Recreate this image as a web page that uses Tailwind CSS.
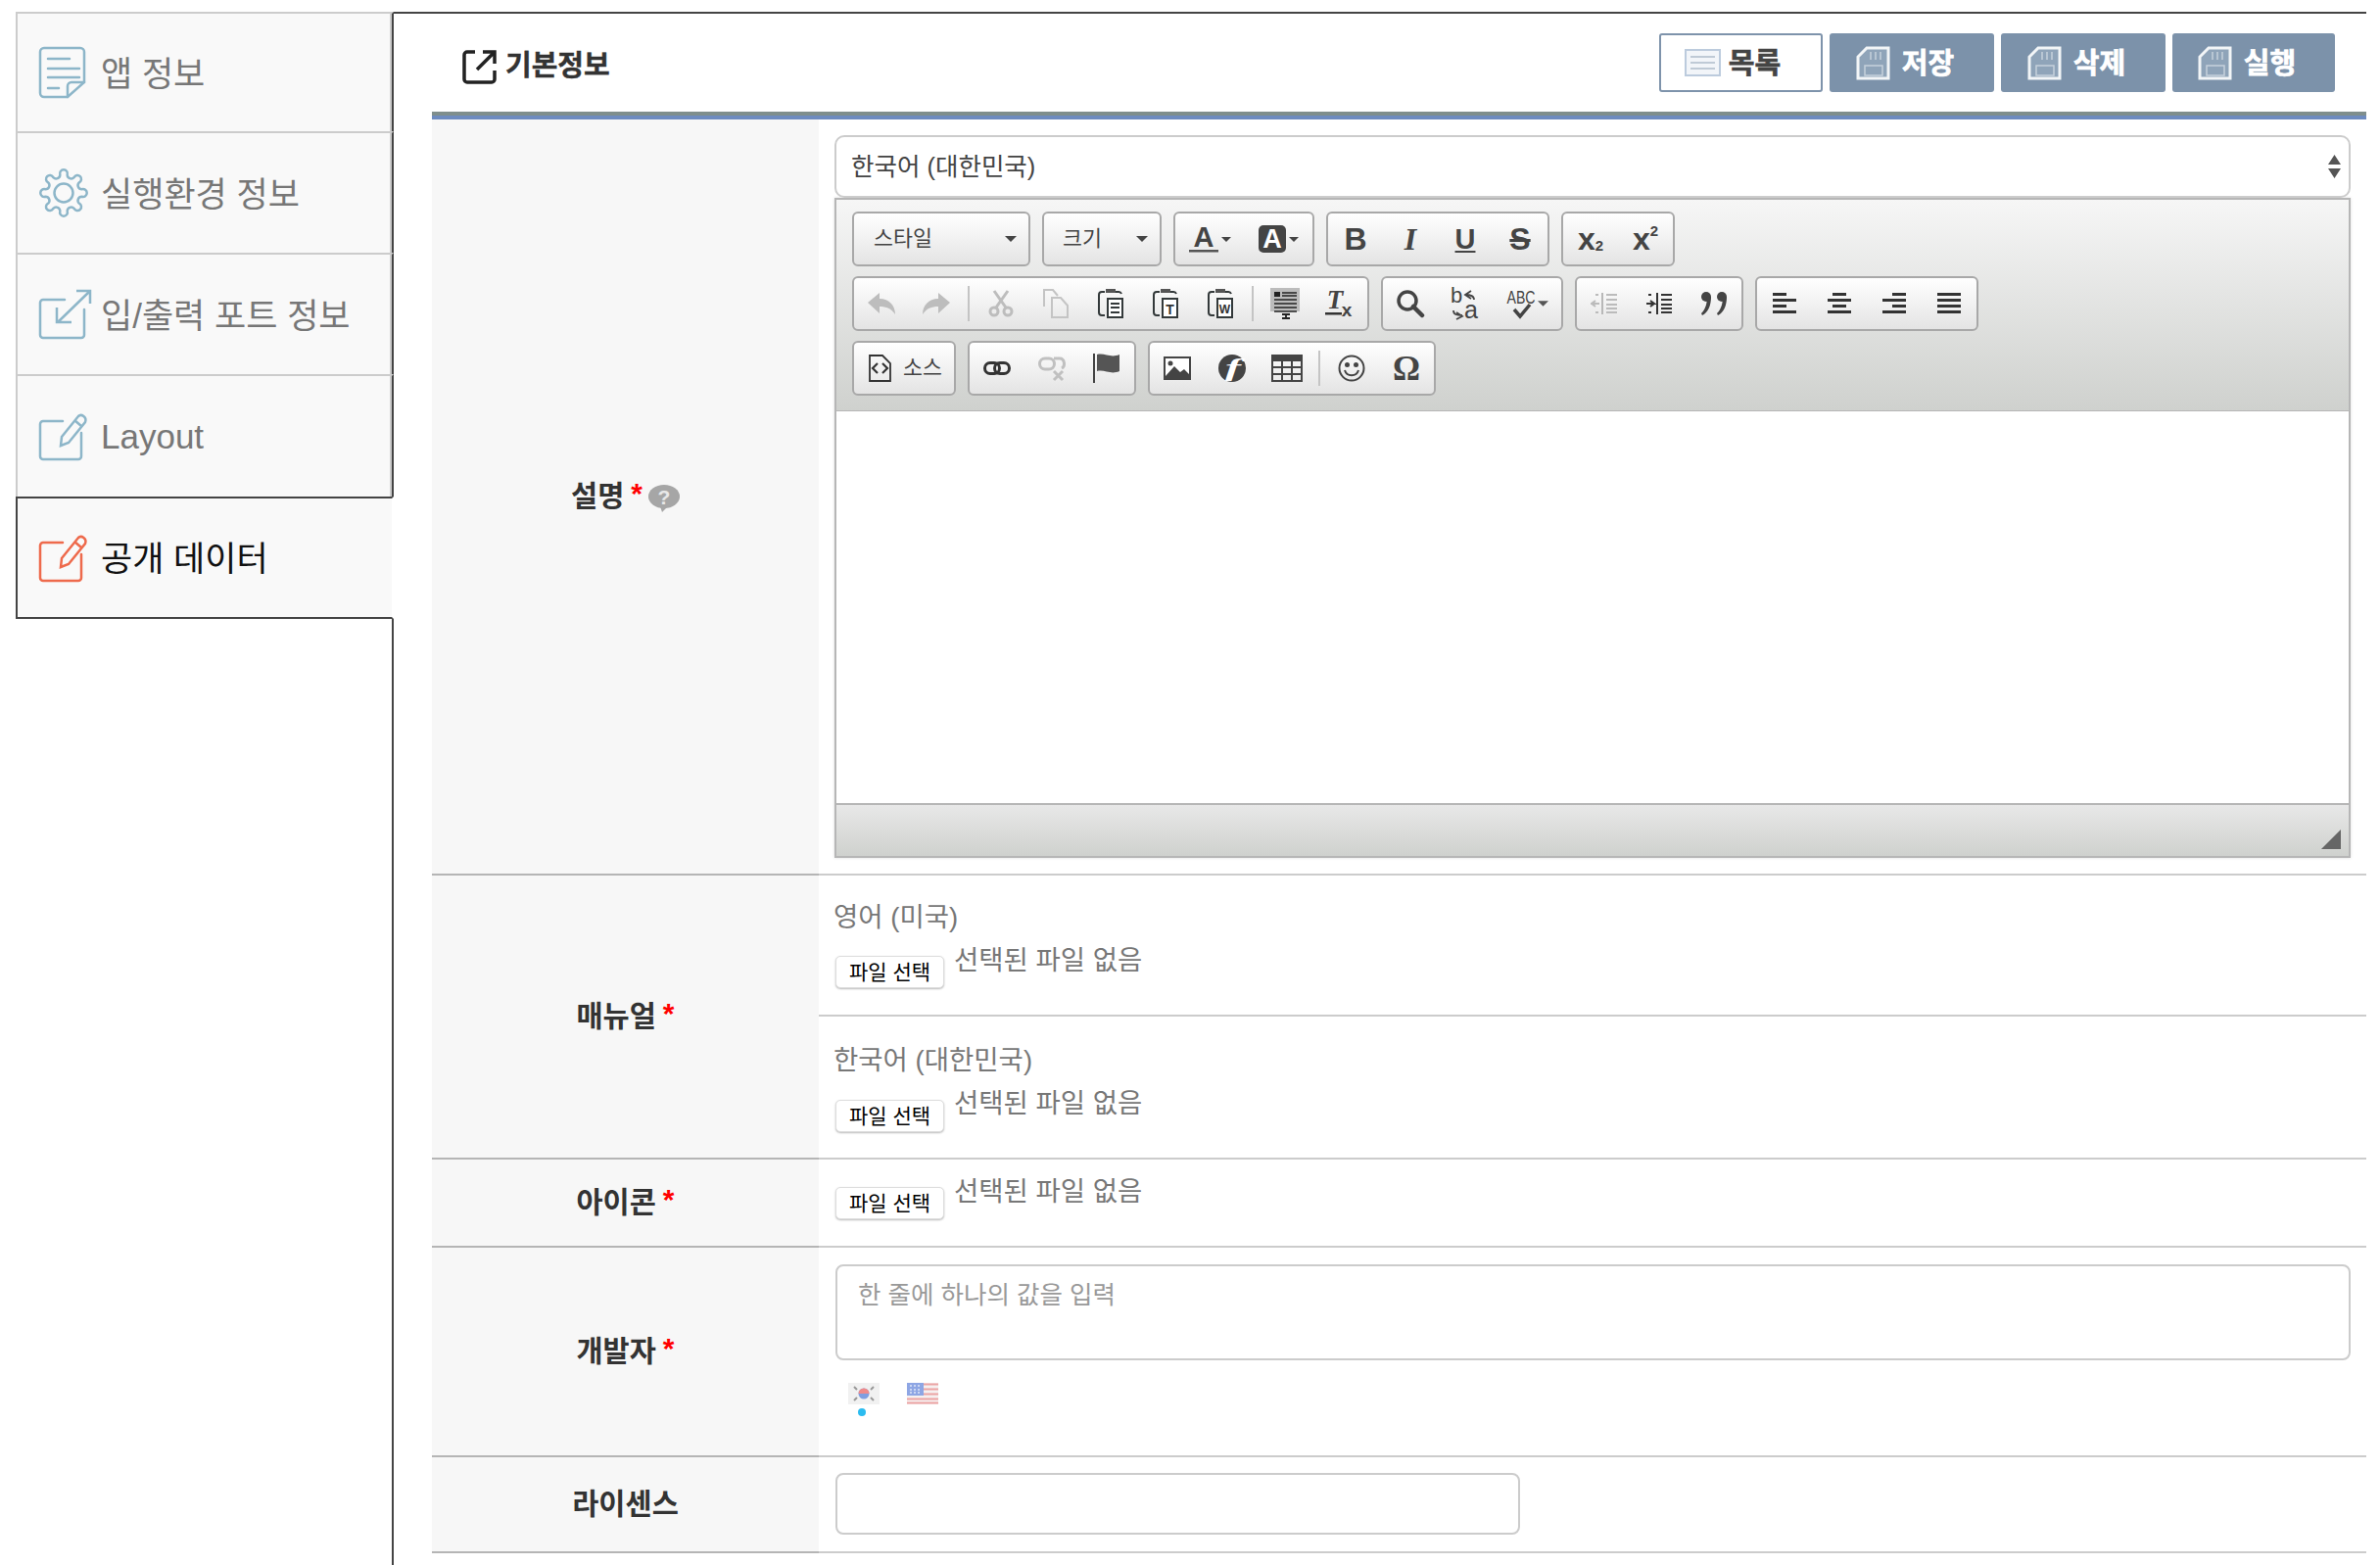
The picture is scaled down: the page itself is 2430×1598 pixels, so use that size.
<!DOCTYPE html>
<html lang="ko">
<head>
<meta charset="UTF-8" />
<title>공개 데이터</title>
<script src="https://cdn.jsdelivr.net/npm/@tailwindcss/browser@4"></script>
</head>
<body class="bg-white font-['Liberation_Sans','Noto_Sans_CJK_KR',sans-serif] text-[#444]">
<div class="flex h-[1598px] overflow-hidden pt-[12px] pl-[16px]">

  <!-- Side tabs -->
  <aside class="flex w-[386px] shrink-0 flex-col text-[35px] text-[#777]">
    <a class="flex h-[122px] shrink-0 items-center border-t-2 border-l-2 border-r-2 border-[#ccc] border-r-[#444] bg-[#f9f9f9] shadow-[inset_-2px_0_0_#ccc]">
      <span class="flex w-[85px] shrink-0 pl-[21px]">
        <svg width="49" height="54" viewBox="0 0 49 54" fill="none" stroke="#8db6c9" stroke-width="2.5"><path d="M30 52H6a4 4 0 0 1-4-4V6a4 4 0 0 1 4-4h37a4 4 0 0 1 4 4v31Z"/><path d="M30 52V41a4 4 0 0 1 4-4h13M10 13h22M10 23h32M10 32h32M10 43h11" stroke-linecap="round"/></svg>
      </span>
      <span class="pt-[4px]">앱 정보</span>
    </a>
    <a class="flex h-[124px] shrink-0 items-center border-t-2 border-l-2 border-r-2 border-[#ccc] border-r-[#444] bg-[#f9f9f9] shadow-[inset_-2px_0_0_#ccc]">
      <span class="flex w-[85px] shrink-0 pl-[21px]">
        <svg width="52" height="52" viewBox="0 0 52 52" fill="none" stroke="#8db6c9" stroke-width="2.5" stroke-linejoin="round"><circle cx="26" cy="26" r="9.500"/><path d="M44.600 22.300A3.900 3.900 0 1 1 44.600 29.700 4 4 0 0 0 41.800 36.600 3.900 3.900 0 1 1 36.600 41.800 4 4 0 0 0 29.700 44.600 3.900 3.900 0 1 1 22.300 44.600 4 4 0 0 0 15.400 41.800 3.900 3.900 0 1 1 10.200 36.600 4 4 0 0 0 7.400 29.700 3.900 3.900 0 1 1 7.400 22.300 4 4 0 0 0 10.200 15.400 3.900 3.900 0 1 1 15.400 10.200 4 4 0 0 0 22.300 7.400 3.900 3.900 0 1 1 29.700 7.400 4 4 0 0 0 36.600 10.200 3.900 3.900 0 1 1 41.800 15.400 4 4 0 0 0 44.600 22.300Z"/></svg>
      </span>
      <span class="pt-[4px]">실행환경 정보</span>
    </a>
    <a class="flex h-[124px] shrink-0 items-center border-t-2 border-l-2 border-r-2 border-[#ccc] border-r-[#444] bg-[#f9f9f9] shadow-[inset_-2px_0_0_#ccc]">
      <span class="flex w-[85px] shrink-0 pl-[21px]">
        <svg width="55" height="52" viewBox="0 0 55 52" fill="none" stroke="#8db6c9" stroke-width="2.5"><path d="M27 11H5a3 3 0 0 0-3 3v33a3 3 0 0 0 3 3h39a3 3 0 0 0 3-3V21" stroke-linecap="round"/><path d="M39 2h14v13M53 2 20 34M19 19v15h15"/></svg>
      </span>
      <span class="pt-[4px]">입/출력 포트 정보</span>
    </a>
    <a class="flex h-[125px] shrink-0 items-center border-t-2 border-l-2 border-r-2 border-[#ccc] border-r-[#444] bg-[#f9f9f9] shadow-[inset_-2px_0_0_#ccc]">
      <span class="flex w-[85px] shrink-0 pl-[21px]">
        <svg width="51" height="50" viewBox="0 0 51 50" fill="none" stroke="#8db6c9" stroke-width="2.5"><path d="M25 9H5a3 3 0 0 0-3 3v33a3 3 0 0 0 3 3h36a3 3 0 0 0 3-3V21" stroke-linecap="round"/><path d="M24 25 41 4c3-3 9 1 7 6L31 31l-8 3ZM37 8l7 6"/></svg>
      </span>
      <span class="pt-[1px]">Layout</span>
    </a>
    <a class="flex h-[125px] shrink-0 items-center border-y-2 border-l-2 border-r-2 border-[#444] border-r-white bg-[#f9f9f9] text-[#111]">
      <span class="flex w-[85px] shrink-0 pl-[21px]">
        <svg width="51" height="50" viewBox="0 0 51 50" fill="none" stroke="#ee6a4c" stroke-width="2.5"><path d="M25 9H5a3 3 0 0 0-3 3v33a3 3 0 0 0 3 3h36a3 3 0 0 0 3-3V21" stroke-linecap="round"/><path d="M24 25 41 4c3-3 9 1 7 6L31 31l-8 3ZM37 8l7 6"/></svg>
      </span>
      <span class="pt-[4px]">공개 데이터</span>
    </a>
    <div class="flex-1 border-r-2 border-[#444]"></div>
  </aside>

  <!-- Main panel -->
  <main class="mr-[14px] min-w-0 flex-1 self-start border-t-2 border-[#444] pl-[39px]">
    <header class="flex h-[100px] items-center justify-between pr-[32px] pl-[31px]">
      <h2 class="flex items-center gap-[9px] pt-[8px] text-[29px] font-bold text-[#333] [-webkit-text-stroke:0.4px_currentColor]">
        <svg width="35" height="36" viewBox="0 0 35 36" fill="none" stroke="#222" stroke-width="3.5"><path d="M13 3H5a3 3 0 0 0-3 3v25a3 3 0 0 0 3 3h25a3 3 0 0 0 3-3v-9"/><path d="M21 3h12v12M33 3 15 21"/></svg>
        기본정보
      </h2>
      <div class="flex gap-[7px] text-[29px] font-bold [-webkit-text-stroke:0.7px_currentColor]">
        <button class="flex h-[60px] w-[167px] items-center justify-center gap-[8px] rounded-[3px] border-2 border-[#7e93ab] bg-white pr-[17px] text-[#444]">
          <svg width="37" height="28" viewBox="0 0 37 28"><rect x="1" y="1" width="35" height="26" fill="#f2f5f9" stroke="#bccbdd" stroke-width="2"/><path d="M6 8h25M6 14h25M6 20h25" stroke="#bfcad6" stroke-width="2"/></svg>
          <span class="pt-[3px]">목록</span>
        </button>
        <button class="flex h-[60px] w-[168px] items-center justify-center gap-[12px] rounded-[3px] bg-[#7c92aa] pr-[14px] text-white">
          <svg width="35" height="35" viewBox="0 0 35 35" fill="#8fa4b9"><path d="M11 2h22v31H2V11Z" stroke="#f2f5f7" stroke-width="3"/><path d="M15 6v8M20 6v8M25 6v8M9 20h18v10H9Z" stroke="#c6d1dc" stroke-width="1.500" fill="none"/></svg>
          <span class="pt-[3px]">저장</span>
        </button>
        <button class="flex h-[60px] w-[168px] items-center justify-center gap-[12px] rounded-[3px] bg-[#7c92aa] pr-[14px] text-white">
          <svg width="35" height="35" viewBox="0 0 35 35" fill="#8fa4b9"><path d="M11 2h22v31H2V11Z" stroke="#f2f5f7" stroke-width="3"/><path d="M15 6v8M20 6v8M25 6v8M9 20h18v10H9Z" stroke="#c6d1dc" stroke-width="1.500" fill="none"/></svg>
          <span class="pt-[3px]">삭제</span>
        </button>
        <button class="flex h-[60px] w-[166px] items-center justify-center gap-[12px] rounded-[3px] bg-[#7c92aa] pr-[14px] text-white">
          <svg width="35" height="35" viewBox="0 0 35 35" fill="#8fa4b9"><path d="M11 2h22v31H2V11Z" stroke="#f2f5f7" stroke-width="3"/><path d="M15 6v8M20 6v8M25 6v8M9 20h18v10H9Z" stroke="#c6d1dc" stroke-width="1.500" fill="none"/></svg>
          <span class="pt-[3px]">실행</span>
        </button>
      </div>
    </header>
    <div class="h-[4px] bg-[#7f8e8c]"></div>
    <div class="h-[4px] bg-[#6d8bbf]"></div>

    <div class="grid grid-cols-[395px_1fr] text-[27.5px]">
      <!-- 설명 -->
      <div class="flex items-center justify-center border-b-2 border-[#b5b5b5] bg-[#f7f7f7] text-[29.5px] font-bold text-[#333]">
        <span>설명</span><span class="mb-[6px] ml-[7px] text-[30px] leading-none text-[#f00]">*</span>
        <svg class="mt-[4px] ml-[6px]" width="32" height="28" viewBox="0 0 32 28"><ellipse cx="16" cy="12" rx="16" ry="12" fill="#a6a6a6"/><path d="m12 22 2 6 6-6Z" fill="#a6a6a6"/><text x="16" y="20" text-anchor="middle" font-size="21" font-weight="700" fill="#e8e8e8">?</text></svg>
      </div>
      <div class="h-[772px] border-b-2 border-[#ccc] pt-[16px] pr-[16px] pl-[16px]">
        <div class="relative flex h-[64px] items-center rounded-[10px] border-2 border-[#ccc] bg-white pl-[15px] text-[25.5px] text-[#444]">
          한국어 (대한민국)
          <svg class="absolute top-[18px] right-[8px]" width="13" height="24" viewBox="0 0 13 24" fill="#555"><path d="M6.500 0 13 10H0ZM0 14h13L6.500 24Z"/></svg>
        </div>
        <!-- Editor -->
        <div class="flex h-[674px] flex-col border-2 border-[#b6b6b6] shadow-[0_0_3px_#ddd]">
          <div class="flex h-[216px] flex-col gap-[10px] border-b border-[#b6b6b6] bg-linear-to-b from-[#f6f6f6] to-[#cfd1ce] pt-[12px] pl-[16px] text-[21.7px] text-[#444]">
            <div class="flex gap-[12px]">
              <div class="flex h-[56px] w-[182px] items-center justify-between rounded-[6px] border-2 border-[#a8a8a8] bg-linear-to-b from-white to-[#e4e4e4] pr-[12px] pl-[20px]">
                스타일
                <svg width="12" height="6" viewBox="0 0 12 6" fill="#444"><path d="M0 0h12L6 6Z"/></svg>
              </div>
              <div class="flex h-[56px] w-[122px] items-center justify-between rounded-[6px] border-2 border-[#a8a8a8] bg-linear-to-b from-white to-[#e4e4e4] pr-[12px] pl-[19px]">
                크기
                <svg width="12" height="6" viewBox="0 0 12 6" fill="#444"><path d="M0 0h12L6 6Z"/></svg>
              </div>
              <div class="flex h-[56px] w-[144px] items-center rounded-[6px] border-2 border-[#a8a8a8] bg-linear-to-b from-white to-[#e4e4e4]">
                <div class="flex w-[70px] items-center justify-center gap-[3px]">
                  <svg class="overflow-visible" width="30" height="30" viewBox="0 0 30 30"><text x="15" y="23" text-anchor="middle" font-size="29" font-weight="700" fill="#444">A</text><rect y="26" width="30" height="2.5" fill="#555"/></svg>
                  <svg width="10" height="5" viewBox="0 0 12 6" fill="#444"><path d="M0 0h12L6 6Z"/></svg>
                </div>
                <div class="flex w-[70px] items-center justify-center gap-[3px]">
                  <svg class="overflow-visible" width="28" height="28" viewBox="0 0 28 28"><rect width="28" height="28" rx="5" fill="#444"/><text x="14" y="23" text-anchor="middle" font-size="27" font-weight="700" fill="#fff">A</text></svg>
                  <svg width="10" height="5" viewBox="0 0 12 6" fill="#444"><path d="M0 0h12L6 6Z"/></svg>
                </div>
              </div>
              <div class="flex h-[56px] w-[228px] items-center rounded-[6px] border-2 border-[#a8a8a8] bg-linear-to-b from-white to-[#e4e4e4]">
                <div class="flex w-[56px] justify-center text-[32px] leading-none font-bold">B</div>
                <div class="flex w-[56px] justify-center font-['Liberation_Serif',serif] text-[32px] leading-none font-bold italic">I</div>
                <div class="flex w-[56px] justify-center text-[29px] leading-none font-bold underline">U</div>
                <div class="flex w-[56px] justify-center text-[32px] leading-none font-bold line-through">S</div>
              </div>
              <div class="flex h-[56px] w-[116px] items-center rounded-[6px] border-2 border-[#a8a8a8] bg-linear-to-b from-white to-[#e4e4e4]">
                <div class="flex w-[56px] justify-center text-[32px] leading-none font-bold">x<span class="mt-[15px] text-[15px]">2</span></div>
                <div class="flex w-[56px] justify-center text-[32px] leading-none font-bold">x<span class="text-[15px]">2</span></div>
              </div>
            </div>
            <div class="flex gap-[12px]">
              <div class="flex h-[56px] w-[528px] items-center rounded-[6px] border-2 border-[#a8a8a8] bg-linear-to-b from-white to-[#e4e4e4]">
                <div class="flex w-[56px] justify-center"><svg width="28" height="22" viewBox="0 0 28 22" fill="#bdbdbd"><path d="M0 10 12 0v6c10 0 16 7 16 16-4-6-9-8-16-8v7Z"/></svg></div>
                <div class="flex w-[56px] justify-center"><svg width="28" height="22" viewBox="0 0 28 22" fill="#bdbdbd"><path d="M28 10 16 0v6C6 6 0 13 0 22c4-6 9-8 16-8v7Z"/></svg></div>
                <div class="flex w-[10px] justify-center"><div class="h-[36px] w-[2px] bg-[#c4c4c4]"></div></div>
                <div class="flex w-[56px] justify-center"><svg width="26" height="28" viewBox="0 0 26 28" fill="none" stroke="#bdbdbd" stroke-width="3"><circle cx="6" cy="22" r="4"/><circle cx="20" cy="22" r="4"/><path d="M8 18 20 1M18 18 6 1"/></svg></div>
                <div class="flex w-[56px] justify-center"><svg width="26" height="30" viewBox="0 0 26 30" fill="none" stroke="#c4c4c4" stroke-width="2"><path d="M1 18V1h9l5 6M9 9h9l7 8v12H9Z"/></svg></div>
                <div class="flex w-[56px] justify-center"><svg width="26" height="30" viewBox="0 0 26 30" fill="none" stroke="#33393a" stroke-width="2"><path d="M7 3H4a3 3 0 0 0-3 3v18a3 3 0 0 0 3 3h3"/><path d="M18 3h3a3 3 0 0 1 3 2"/><rect x="8" y="0" width="10" height="4" fill="#555" stroke="none"/><rect x="10" y="10" width="15" height="19" fill="#fff"/><path d="M13 15h9M13 19h9M13 24h9"/></svg></div>
                <div class="flex w-[56px] justify-center"><svg class="overflow-visible" width="26" height="30" viewBox="0 0 26 30" fill="none" stroke="#33393a" stroke-width="2"><path d="M7 3H4a3 3 0 0 0-3 3v18a3 3 0 0 0 3 3h3"/><path d="M18 3h3a3 3 0 0 1 3 2"/><rect x="8" y="0" width="10" height="4" fill="#555" stroke="none"/><rect x="10" y="10" width="15" height="19" fill="#fff"/><text x="17.5" y="26" text-anchor="middle" font-size="14" font-weight="700" fill="#333" stroke="none">T</text></svg></div>
                <div class="flex w-[56px] justify-center"><svg class="overflow-visible" width="26" height="30" viewBox="0 0 26 30" fill="none" stroke="#33393a" stroke-width="2"><path d="M7 3H4a3 3 0 0 0-3 3v18a3 3 0 0 0 3 3h3"/><path d="M18 3h3a3 3 0 0 1 3 2"/><rect x="8" y="0" width="10" height="4" fill="#555" stroke="none"/><rect x="10" y="10" width="15" height="19" fill="#fff"/><text x="17.5" y="25" text-anchor="middle" font-size="12" font-weight="700" fill="#333" stroke="none">W</text></svg></div>
                <div class="flex w-[10px] justify-center"><div class="h-[36px] w-[2px] bg-[#c4c4c4]"></div></div>
                <div class="flex w-[56px] justify-center"><svg width="30" height="32" viewBox="0 0 30 32"><rect width="30" height="24" fill="#bcbcbc"/><rect x="4" y="4" width="6" height="5" fill="#222"/><path d="M12 5h15M12 8h15M4 12h23M4 16h23M4 20h23M4 24h23" stroke="#222" stroke-width="1.6"/><path d="M12 27h8M16 27v4M12 31h8" stroke="#222" stroke-width="1.8"/></svg></div>
                <div class="flex w-[56px] justify-center"><svg class="overflow-visible" width="30" height="30" viewBox="0 0 30 30"><text x="10" y="20" text-anchor="middle" font-family="Liberation Serif" font-size="27" font-weight="700" font-style="italic" fill="#444">T</text><rect x="0" y="24" width="17" height="2.5" fill="#333"/><text x="22" y="28" text-anchor="middle" font-size="19" font-weight="700" fill="#444">x</text></svg></div>
              </div>
              <div class="flex h-[56px] w-[186px] items-center rounded-[6px] border-2 border-[#a8a8a8] bg-linear-to-b from-white to-[#e4e4e4]">
                <div class="flex w-[56px] justify-center"><svg width="30" height="30" viewBox="0 0 30 30" fill="none" stroke="#444"><circle cx="12" cy="12" r="9" stroke-width="3.5"/><path d="m18 18 9 9" stroke-width="4.5" stroke-linecap="round"/></svg></div>
                <div class="flex w-[56px] justify-center"><svg class="overflow-visible" width="30" height="32" viewBox="0 0 30 32"><text x="6" y="15" text-anchor="middle" font-size="22" fill="#444">b</text><text x="21" y="31" text-anchor="middle" font-size="25" fill="#444">a</text><path d="M21 3l-6 4 6 4M15 7c6 0 9 1 9 5M6 25l6 4-6 3M12 28c-6 0-9-1-9-5" fill="none" stroke="#444" stroke-width="1.8"/></svg></div>
                <div class="flex w-[70px] items-center justify-center gap-[2px]">
                  <svg class="overflow-visible" width="30" height="32" viewBox="0 0 30 32"><text x="15" y="16" text-anchor="middle" font-size="19" fill="#444" textLength="29" lengthAdjust="spacingAndGlyphs">ABC</text><path d="m8 22 6 7L24 17" fill="none" stroke="#444" stroke-width="3.5"/></svg>
                  <svg width="11" height="6" viewBox="0 0 12 6" fill="#555"><path d="M0 0h12L6 6Z"/></svg>
                </div>
              </div>
              <div class="flex h-[56px] w-[172px] items-center rounded-[6px] border-2 border-[#a8a8a8] bg-linear-to-b from-white to-[#e4e4e4]">
                <div class="flex w-[56px] justify-center"><svg width="28" height="24" viewBox="0 0 28 24"><path d="M12 1v22" stroke="#b8b8b8" stroke-width="2"/><path d="M16 3h11M16 8h11M16 13h11M16 17h11M16 21h11" stroke="#bbb" stroke-width="2"/><path d="M9 12H1l4-3M1 12l4 3M5 3h3M5 21h3" fill="none" stroke="#bbb" stroke-width="2"/></svg></div>
                <div class="flex w-[56px] justify-center"><svg width="28" height="24" viewBox="0 0 28 24"><path d="M12 1v22" stroke="#333" stroke-width="2"/><path d="M16 3h11M16 8h11M16 13h11M16 17h11M16 21h11" stroke="#333" stroke-width="2"/><path d="M1 12h8l-4-3M9 12l-4 3M3 3h3M3 21h3" fill="none" stroke="#333" stroke-width="2"/></svg></div>
                <div class="flex w-[56px] justify-center"><svg width="28" height="26" viewBox="0 0 28 26" fill="#444"><circle cx="6" cy="6" r="5"/><path d="M2 25c6-3 9-10 9-19H7c0 7-2 13-6 17ZM18 25c6-3 9-10 9-19h-4c0 7-2 13-6 17Z"/><circle cx="22" cy="6" r="5"/></svg></div>
              </div>
              <div class="flex h-[56px] w-[228px] items-center rounded-[6px] border-2 border-[#a8a8a8] bg-linear-to-b from-white to-[#e4e4e4]">
                <div class="flex w-[56px] justify-center"><svg width="24" height="22" viewBox="0 0 24 22" fill="#333"><path d="M0 0h14v3H0ZM0 6h24v3H0ZM0 12h14v3H0ZM0 18h24v3H0Z"/></svg></div>
                <div class="flex w-[56px] justify-center"><svg width="24" height="22" viewBox="0 0 24 22" fill="#333"><path d="M5 0h14v3H5ZM0 6h24v3H0ZM5 12h14v3H5ZM0 18h24v3H0Z"/></svg></div>
                <div class="flex w-[56px] justify-center"><svg width="24" height="22" viewBox="0 0 24 22" fill="#333"><path d="M10 0h14v3H10ZM0 6h24v3H0ZM10 12h14v3H10ZM0 18h24v3H0Z"/></svg></div>
                <div class="flex w-[56px] justify-center"><svg width="24" height="22" viewBox="0 0 24 22" fill="#333"><path d="M0 0h24v3H0ZM0 6h24v3H0ZM0 12h24v3H0ZM0 18h24v3H0Z"/></svg></div>
              </div>
            </div>
            <div class="flex gap-[12px]">
              <div class="flex h-[56px] w-[106px] items-center gap-[12px] rounded-[6px] border-2 border-[#a8a8a8] bg-linear-to-b from-white to-[#e4e4e4] pl-[15px]">
                <svg width="23" height="28" viewBox="0 0 23 28" fill="none" stroke="#333" stroke-width="1.8"><path d="M1 1h13l8 8v18H1Z"/><path d="M9 9l-5 5 5 5M14 9l5 5-5 5" stroke-width="2.2"/></svg>
                소스
              </div>
              <div class="flex h-[56px] w-[172px] items-center rounded-[6px] border-2 border-[#a8a8a8] bg-linear-to-b from-white to-[#e4e4e4]">
                <div class="flex w-[56px] justify-center"><svg width="28" height="14" viewBox="0 0 28 14" fill="none" stroke="#333" stroke-width="3"><rect x="1.500" y="1.500" width="15" height="11" rx="5.500"/><rect x="11.500" y="1.500" width="15" height="11" rx="5.500"/></svg></div>
                <div class="flex w-[56px] justify-center"><svg width="28" height="28" viewBox="0 0 28 28" fill="none" stroke="#c0c0c0" stroke-width="3"><rect x="1.500" y="4" width="15" height="11" rx="5.500"/><path d="M16 4h6c5 0 6 8 2 10M16 17l9 9M25 17l-9 9"/></svg></div>
                <div class="flex w-[56px] justify-center"><svg width="28" height="30" viewBox="0 0 28 30"><path d="M1 0v30" stroke="#444" stroke-width="2"/><path d="M4 1c8-2 14 4 23 0v17c-9 4-15-2-23 0Z" fill="#555"/></svg></div>
              </div>
              <div class="flex h-[56px] w-[294px] items-center rounded-[6px] border-2 border-[#a8a8a8] bg-linear-to-b from-white to-[#e4e4e4]">
                <div class="flex w-[56px] justify-center"><svg width="28" height="24" viewBox="0 0 28 24"><rect x="1" y="1" width="26" height="22" fill="#fff" stroke="#444" stroke-width="2"/><circle cx="7" cy="7" r="2.500" fill="#444"/><path d="M2 20 11 10l6 6 4-3 6 6v4H2Z" fill="#444"/></svg></div>
                <div class="flex w-[56px] justify-center"><svg class="overflow-visible" width="28" height="28" viewBox="0 0 28 28"><circle cx="14" cy="14" r="14" fill="#444"/><text x="15" y="22" text-anchor="middle" font-family="Liberation Serif" font-size="25" font-weight="700" font-style="italic" fill="#fff" textLength="16" lengthAdjust="spacingAndGlyphs">f</text></svg></div>
                <div class="flex w-[56px] justify-center"><svg width="32" height="28" viewBox="0 0 32 28" fill="none"><rect width="32" height="7" fill="#444"/><path d="M1 6v21h30V6M11 6v21M21 6v21M1 13h30M1 20h30" stroke="#444" stroke-width="2"/></svg></div>
                <div class="flex w-[10px] justify-center"><div class="h-[36px] w-[2px] bg-[#c4c4c4]"></div></div>
                <div class="flex w-[56px] justify-center"><svg width="28" height="28" viewBox="0 0 28 28" fill="none" stroke="#444" stroke-width="2"><circle cx="14" cy="14" r="12.500"/><circle cx="9.500" cy="10.500" r="1.500" fill="#444"/><circle cx="18.500" cy="10.500" r="1.500" fill="#444"/><path d="M7 16c2 7 12 7 14 0"/></svg></div>
                <div class="flex w-[56px] justify-center font-['Liberation_Serif',serif] text-[35px] leading-none font-bold">Ω</div>
              </div>
            </div>
          </div>
          <div class="flex-1 bg-white"></div>
          <div class="flex h-[54px] items-end justify-end border-t-2 border-[#b6b6b6] bg-linear-to-b from-[#e8e8e8] to-[#cfd1ce] pr-[8px] pb-[7px]">
            <svg width="20" height="20" viewBox="0 0 20 20" fill="#666"><path d="M20 0v20H0Z"/></svg>
          </div>
        </div>
      </div>

      <!-- 매뉴얼 -->
      <div class="flex items-center justify-center border-b-2 border-[#b5b5b5] bg-[#f7f7f7] text-[29.5px] font-bold text-[#333]">
        <span>매뉴얼</span><span class="mb-[6px] ml-[7px] text-[30px] leading-none text-[#f00]">*</span>
      </div>
      <div class="border-b-2 border-[#ccc]">
        <div class="h-[144px] border-b-2 border-[#ccc] pt-[23px] pl-[15px] text-[#777]">
          <p class="leading-[40px]">영어 (미국)</p>
          <div class="mt-[4px] flex items-start">
            <button class="mt-[15px] ml-[2px] h-[33px] w-[111px] rounded-[5px] border border-[#ddd] bg-white text-[21px] leading-none text-black shadow-[0_1px_2px_#bbb]">파일 선택</button>
            <span class="ml-[10px] leading-[40px]">선택된 파일 없음</span>
          </div>
        </div>
        <div class="h-[144px] pt-[25px] pl-[15px] text-[#777]">
          <p class="leading-[40px]">한국어 (대한민국)</p>
          <div class="mt-[4px] flex items-start">
            <button class="mt-[16px] ml-[2px] h-[33px] w-[111px] rounded-[5px] border border-[#ddd] bg-white text-[21px] leading-none text-black shadow-[0_1px_2px_#bbb]">파일 선택</button>
            <span class="ml-[10px] leading-[40px]">선택된 파일 없음</span>
          </div>
        </div>
      </div>

      <!-- 아이콘 -->
      <div class="flex items-center justify-center border-b-2 border-[#b5b5b5] bg-[#f7f7f7] text-[29.5px] font-bold text-[#333]">
        <span>아이콘</span><span class="mb-[6px] ml-[7px] text-[30px] leading-none text-[#f00]">*</span>
      </div>
      <div class="h-[90px] border-b-2 border-[#ccc] pt-[13px] pl-[15px] text-[#777]">
        <div class="flex items-start">
          <button class="mt-[15px] ml-[2px] h-[33px] w-[111px] rounded-[5px] border border-[#ddd] bg-white text-[21px] leading-none text-black shadow-[0_1px_2px_#bbb]">파일 선택</button>
          <span class="ml-[10px] leading-[40px]">선택된 파일 없음</span>
        </div>
      </div>

      <!-- 개발자 -->
      <div class="flex items-center justify-center border-b-2 border-[#b5b5b5] bg-[#f7f7f7] text-[29.5px] font-bold text-[#333]">
        <span>개발자</span><span class="mb-[6px] ml-[7px] text-[30px] leading-none text-[#f00]">*</span>
      </div>
      <div class="h-[214px] border-b-2 border-[#ccc] pt-[17px] pr-[16px] pl-[17px]">
        <textarea class="block h-[98px] w-full resize-none rounded-[8px] border-2 border-[#ccc] px-[21px] py-[10px] text-[25.5px] placeholder:text-[#999]" placeholder="한 줄에 하나의 값을 입력"></textarea>
        <div class="mt-[23px] flex gap-[28px] pl-[13px]">
          <div class="flex flex-col gap-[4px]">
            <svg class="blur-[0.5px]" width="32" height="22" viewBox="0 0 32 22"><rect width="32" height="22" fill="#f1f1f1"/><circle cx="16" cy="11" r="5.500" fill="#7f9ee0"/><path d="M10.500 11a5.500 5.500 0 0 1 11 0Z" fill="#ef8a8a"/><path d="M6 4l3 3M26 4l-3 3M6 18l3-3M26 18l-3-3" stroke="#999" stroke-width="2"/></svg>
            <div class="ml-[10px] h-[8px] w-[8px] rounded-full bg-[#2bbcf0]"></div>
          </div>
          <svg class="blur-[0.5px]" width="32" height="22" viewBox="0 0 32 22"><rect width="32" height="22" fill="#f6f0f0"/><path d="M0 1.500h32M0 6.500h32M0 11.500h32M0 16.500h32M0 20.500h32" stroke="#eba3a3" stroke-width="2"/><rect width="17" height="13" fill="#8ea6e4"/><path d="M3 3h11M3 7h11M3 10h11" stroke="#dfe6f8" stroke-width="1.500" stroke-dasharray="2 2"/></svg>
        </div>
      </div>

      <!-- 라이센스 -->
      <div class="flex items-center justify-center border-b-2 border-[#b5b5b5] bg-[#f7f7f7] text-[29.5px] font-bold text-[#333]">라이센스</div>
      <div class="h-[98px] border-b-2 border-[#ccc] pt-[16px] pl-[17px]">
        <input class="block h-[63px] w-[699px] rounded-[8px] border-2 border-[#ccc]" type="text" />
      </div>
    </div>
  </main>
</div>
</body>
</html>
